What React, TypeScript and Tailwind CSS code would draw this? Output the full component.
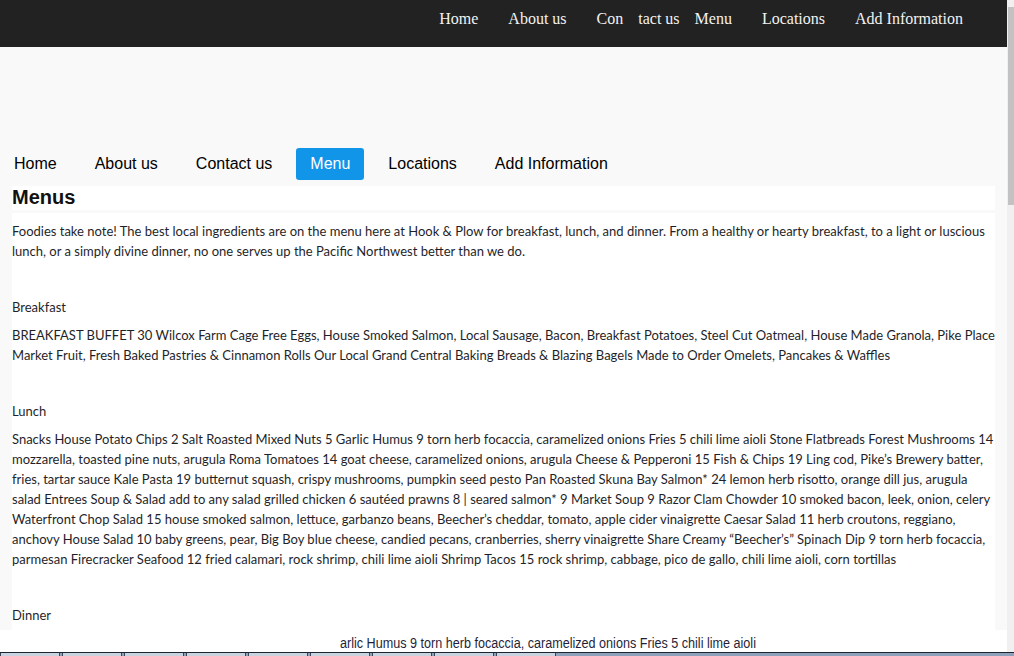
const topLinks = [
  { label: 'Home', gap: 'mr-[30px]' },
  { label: 'About us', gap: 'mr-[30px]' },
  { label: 'Con', gap: 'mr-[15px]' },
  { label: 'tact us', gap: 'mr-[15px]' },
  { label: 'Menu', gap: 'mr-[30px]' },
  { label: 'Locations', gap: 'mr-[30px]' },
  { label: 'Add Information', gap: '' },
];

const navItems = [
  { label: 'Home', active: false },
  { label: 'About us', active: false },
  { label: 'Contact us', active: false },
  { label: 'Menu', active: true },
  { label: 'Locations', active: false },
  { label: 'Add Information', active: false },
];

const intro = [
  'Foodies take note! The best local ingredients are on the menu here at Hook & Plow for breakfast, lunch, and dinner. From a healthy or hearty breakfast, to a light or luscious',
  'lunch, or a simply divine dinner, no one serves up the Pacific Northwest better than we do.',
];

const breakfast = [
  'BREAKFAST BUFFET 30 Wilcox Farm Cage Free Eggs, House Smoked Salmon, Local Sausage, Bacon, Breakfast Potatoes, Steel Cut Oatmeal, House Made Granola, Pike Place',
  'Market Fruit, Fresh Baked Pastries & Cinnamon Rolls Our Local Grand Central Baking Breads & Blazing Bagels Made to Order Omelets, Pancakes & Waffles',
];

const lunch = [
  'Snacks House Potato Chips 2 Salt Roasted Mixed Nuts 5 Garlic Humus 9 torn herb focaccia, caramelized onions Fries 5 chili lime aioli Stone Flatbreads Forest Mushrooms 14',
  'mozzarella, toasted pine nuts, arugula Roma Tomatoes 14 goat cheese, caramelized onions, arugula Cheese & Pepperoni 15 Fish & Chips 19 Ling cod, Pike\u2019s Brewery batter,',
  'fries, tartar sauce Kale Pasta 19 butternut squash, crispy mushrooms, pumpkin seed pesto Pan Roasted Skuna Bay Salmon* 24 lemon herb risotto, orange dill jus, arugula',
  'salad Entrees Soup & Salad add to any salad grilled chicken 6 saut\u00e9ed prawns 8 | seared salmon* 9 Market Soup 9 Razor Clam Chowder 10 smoked bacon, leek, onion, celery',
  'Waterfront Chop Salad 15 house smoked salmon, lettuce, garbanzo beans, Beecher\u2019s cheddar, tomato, apple cider vinaigrette Caesar Salad 11 herb croutons, reggiano,',
  'anchovy House Salad 10 baby greens, pear, Big Boy blue cheese, candied pecans, cranberries, sherry vinaigrette Share Creamy \u201cBeecher\u2019s\u201d Spinach Dip 9 torn herb focaccia,',
  'parmesan Firecracker Seafood 12 fried calamari, rock shrimp, chili lime aioli Shrimp Tacos 15 rock shrimp, cabbage, pico de gallo, chili lime aioli, corn tortillas',
];

function Lines({ lines }: { lines: string[] }) {
  return (
    <div>
      {lines.map((l, i) => (
        <div key={i} className="whitespace-nowrap">{l}</div>
      ))}
    </div>
  );
}

export default function App() {
  return (
    <div className="flex h-[656px] w-[1014px] flex-col overflow-hidden bg-[#f9f9f9]">
      <div className="flex min-h-0 flex-1">
        <div className="flex min-w-0 flex-1 flex-col">
          <header className="flex h-[47px] shrink-0 items-start justify-end bg-[#222222] pr-[44px] pt-[9px] font-['Liberation_Serif',serif] text-[16px] leading-[20px] text-[#f2f2f2]">
            {topLinks.map(({ label, gap }) => (
              <a key={label} href="#" className={gap}>{label}</a>
            ))}
          </header>

          <nav className="mt-[101px] flex h-[32px] shrink-0 gap-[10px] font-['Liberation_Sans',Arial,sans-serif] text-[16px] text-black">
            {navItems.map(({ label, active }) => (
              <a
                key={label}
                href="#"
                className={`flex items-center rounded-[3px] px-[14px] ${active ? 'bg-[#1195e8] text-white' : ''}`}
              >
                {label}
              </a>
            ))}
          </nav>

          <div className="mr-[12px] ml-[12px] mt-[6px] flex flex-1 flex-col font-['Lato','Open_Sans',sans-serif] text-[13px] leading-[20px] text-[#1f1f2a]">
            <h1 className="h-[24px] bg-white font-['Liberation_Sans',Arial,sans-serif] text-[20px] font-bold leading-[23px] text-[#111]">
              Menus
            </h1>
            <div className="mt-[3px] flex-1 bg-white pt-[8px]">
              <Lines lines={intro} />
              <div className="mt-[36px]">Breakfast</div>
              <div className="mt-[8px]"><Lines lines={breakfast} /></div>
              <div className="mt-[36px]">Lunch</div>
              <div className="mt-[8px]"><Lines lines={lunch} /></div>
              <div className="mt-[36px]">Dinner</div>
            </div>
          </div>

          <div className="flex h-[22px] shrink-0 items-center bg-white pt-[5px] pl-[340px] font-['Liberation_Sans',sans-serif] text-[14px] text-[#1f1f3a]">
            <span className="origin-left scale-x-[0.9] whitespace-nowrap">arlic Humus 9 torn herb focaccia, caramelized onions Fries 5 chili lime aioli</span>
          </div>
        </div>

        <div className="flex w-[7px] shrink-0 flex-col bg-[#f0f0f0] pt-[7px]">
          <div className="h-[198px] w-[6px] self-end bg-[#c2c2c2]" />
        </div>
      </div>

      <div className="flex h-[4px] shrink-0 gap-[2px] border-t border-[#1c2433] bg-[#8ea1bb]">
        {[60, 60, 60, 60, 60, 60, 60, 60, 60].map((w, i) => (
          <div key={i} style={{ width: w }} className="border-x border-[#3a4657] bg-[#c9d3e0]" />
        ))}
      </div>
    </div>
  );
}
